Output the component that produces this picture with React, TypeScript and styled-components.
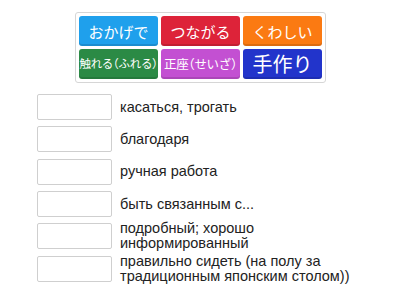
import styled, { createGlobalStyle } from "styled-components";

const GlobalStyle = createGlobalStyle`
  html, body {
    margin: 0;
    padding: 0;
    background: #ffffff;
  }
  body {
    font-family: "Liberation Sans", "Noto Sans CJK JP", Arial, sans-serif;
  }
`;

type Tile = { label: string; color: string; size: number; narrow?: boolean };

const tiles: Tile[] = [
  { label: "おかげで", color: "#1fa0ec", size: 15 },
  { label: "つながる", color: "#dd2339", size: 15 },
  { label: "くわしい", color: "#fb7a12", size: 15 },
  { label: "触れる（ふれる）", color: "#2b8a45", size: 11.5, narrow: true },
  { label: "正座（せいざ）", color: "#c350d2", size: 12.5, narrow: true },
  { label: "手作り", color: "#2234cb", size: 20 },
];

const definitions = [
  "касаться, трогать",
  "благодаря",
  "ручная работа",
  "быть связанным с...",
  "подробный; хорошо информированный",
  "правильно сидеть (на полу за традиционным японским столом))",
];

export default function App() {
  return (
    <>
      <GlobalStyle />
      <Page>
        <TileBank>
          {tiles.map((t) => (
            <TileButton
              key={t.label}
              $color={t.color}
              $size={t.size}
              $narrow={t.narrow}
            >
              {t.label}
            </TileButton>
          ))}
        </TileBank>

        <AnswerList>
          {definitions.map((d) => (
            <AnswerRow key={d}>
              <DropSlot />
              <Definition>{d}</Definition>
            </AnswerRow>
          ))}
        </AnswerList>
      </Page>
    </>
  );
}

const Page = styled.div`
  width: 400px;
  height: 300px;
  overflow: hidden;
  display: flex;
  flex-direction: column;
  align-items: flex-start;
`;

const TileBank = styled.div`
  margin: 12px 0 0 75px;
  padding: 3px;
  border: 1px solid #d6d6d6;
  border-radius: 3px;
  display: grid;
  grid-template-columns: repeat(3, 79px);
  grid-auto-rows: 30px;
  gap: 3px;
`;

const TileButton = styled.div<{
  $color: string;
  $size: number;
  $narrow?: boolean;
}>`
  background: ${(p) => p.$color};
  color: #ffffff;
  border-radius: 3px;
  box-shadow: inset 0 -2px 0 rgba(0, 0, 0, 0.12);
  display: flex;
  align-items: center;
  justify-content: center;
  white-space: nowrap;
  overflow: hidden;
  font-family: "Noto Sans CJK JP", sans-serif;
  font-size: ${(p) => p.$size}px;
  font-feature-settings: ${(p) => (p.$narrow ? '"halt"' : "normal")};
  letter-spacing: ${(p) => (p.$narrow ? "-0.3px" : "0")};
  line-height: 1;
`;

const AnswerList = styled.div`
  margin: 8px 0 0 37px;
  display: flex;
  flex-direction: column;
`;

const AnswerRow = styled.div`
  height: 32.3px;
  display: flex;
  align-items: center;
  gap: 8px;
`;

const DropSlot = styled.div`
  flex: none;
  width: 73px;
  height: 24px;
  border: 1px solid #cfcfcf;
  border-radius: 2px;
  background: #ffffff;
`;

const Definition = styled.div`
  width: 250px;
  font-size: 14.5px;
  line-height: 15px;
  color: #222222;
`;
